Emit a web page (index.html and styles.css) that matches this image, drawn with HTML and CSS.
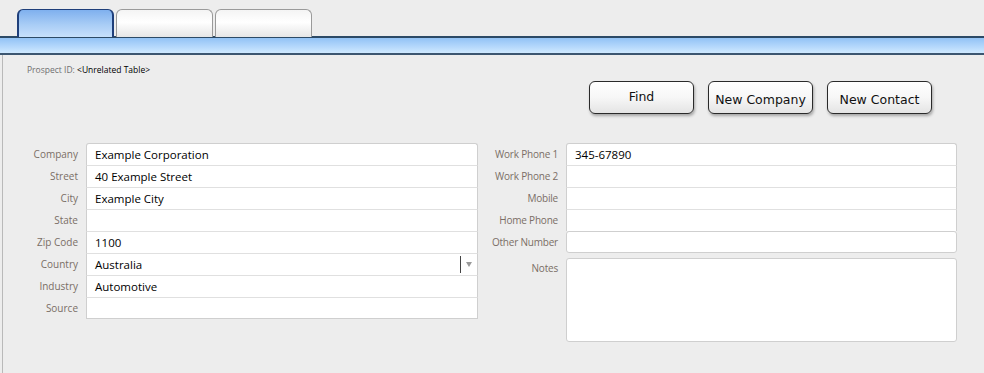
FILE: index.html
```html
<!DOCTYPE html>
<html lang="en">
<head>
  <meta charset="UTF-8" />
  <title>Prospect</title>
  <link rel="stylesheet" href="styles.css">
</head>
<body>

  <div class="tabs">
    <div class="tab active"></div>
    <div class="tab"></div>
    <div class="tab"></div>
  </div>
  <div class="bar"></div>

  <div class="panel">
    <p class="prospect">Prospect ID: <span>&lt;Unrelated Table&gt;</span></p>

    <div class="actions">
      <button class="btn btn-find">Find</button>
      <button class="btn">New Company</button>
      <button class="btn">New Contact</button>
    </div>

    <div class="form">
      <div class="col">
        <div class="row"><label>Company</label><div class="field first">Example Corporation</div></div>
        <div class="row"><label>Street</label><div class="field">40 Example Street</div></div>
        <div class="row"><label>City</label><div class="field">Example City</div></div>
        <div class="row"><label>State</label><div class="field"></div></div>
        <div class="row"><label>Zip Code</label><div class="field">1100</div></div>
        <div class="row"><label>Country</label><div class="field combo">Australia<span class="arrow"></span></div></div>
        <div class="row"><label>Industry</label><div class="field">Automotive</div></div>
        <div class="row"><label>Source</label><div class="field last"></div></div>
      </div>

      <div class="col col-right">
        <div class="row"><label>Work Phone 1</label><div class="field first">345-67890</div></div>
        <div class="row"><label>Work Phone 2</label><div class="field"></div></div>
        <div class="row"><label>Mobile</label><div class="field"></div></div>
        <div class="row"><label>Home Phone</label><div class="field"></div></div>
        <div class="row"><label>Other Number</label><div class="field first last"></div></div>
        <div class="row notes-row"><label>Notes</label><div class="field notes first last"></div></div>
      </div>
    </div>
  </div>

</body>
</html>
```

FILE: styles.css
```css
body {
  margin: 0;
  background-color: #ededed;
  font-family: 'Open Sans', 'DejaVu Sans', sans-serif;
  color: #000;
  height: 373px;
  overflow: hidden;
}

.tabs {
  display: flex;
  gap: 2px;
  padding: 9px 0 0 17px;
  height: 27px;
}

.tab {
  width: 95px;
  height: 27px;
  border: 1px solid #9a9a9a;
  border-bottom: none;
  border-radius: 6px 6px 0 0;
  background: linear-gradient(#f4f4f4, #ffffff 45%, #e6e6e6);
}

.tab.active {
  border-color: #1f3f7a;
  border-width: 1px 2px 0 2px;
  width: 93px;
  background: linear-gradient(#7fb0ee, #a9cdf6 55%, #c7e0fb);
}

.bar {
  height: 15px;
  border-top: 2px solid #2c4a66;
  border-bottom: 2px solid #3c5670;
  background: linear-gradient(#92c2f5, #b0d5fb 50%, #cfe9ff);
}

.panel {
  margin-left: 2px;
  border-left: 1px solid #b9b9b9;
  height: 320px;
  padding: 0 0 0 24px;
}

.prospect {
  margin: 0;
  padding-top: 9px;
  font-size: 8.5px;
  color: #6f6f6f;
}

.prospect span {
  color: #000;
}

.actions {
  display: flex;
  gap: 14px;
  justify-content: flex-end;
  margin: 6px 52px 0 0;
}

.btn {
  width: 105px;
  height: 33px;
  border: 1px solid #2a2a2a;
  border-radius: 6px;
  background: linear-gradient(#ffffff, #f7f7f7 50%, #e4e4e4);
  box-shadow: 1px 2px 3px rgba(0, 0, 0, 0.3);
  font-family: 'DejaVu Sans', Verdana, sans-serif;
  font-size: 12.5px;
  color: #111;
  padding: 3px 0 0 0;
}

.btn-find {
  padding: 0 0 3px 0;
}

.form {
  display: flex;
  gap: 13px;
  margin-top: 29px;
}

.col {
  width: 451px;
}

.col-right {
  width: 466px;
}

.row {
  display: flex;
  height: 22px;
}

.row label {
  flex-shrink: 0;
  width: 51px;
  padding-right: 8px;
  text-align: right;
  white-space: nowrap;
  font-size: 10px;
  line-height: 22px;
  color: #7a6e66;
}

.col-right label {
  width: 67px;
  letter-spacing: -0.2px;
}

.field {
  flex: 1;
  box-sizing: border-box;
  height: 22px;
  background: #fff;
  border: 1px solid #cfcfcf;
  border-top-color: #e0e0e0;
  border-bottom: none;
  font-size: 11.5px;
  line-height: 21px;
  padding-left: 8px;
  position: relative;
}

.field.first {
  border-top-color: #cfcfcf;
  border-radius: 3px 3px 0 0;
}

.field.last {
  border-bottom: 1px solid #cfcfcf;
}

.field.first.last {
  border-radius: 3px;
}

.combo .arrow {
  position: absolute;
  right: 16px;
  top: 2px;
  width: 1px;
  height: 17px;
  background: #444;
}

.combo .arrow::after {
  content: "";
  position: absolute;
  left: 6px;
  top: 6px;
  border-left: 3px solid transparent;
  border-right: 3px solid transparent;
  border-top: 5px solid #9a9a9a;
}

.notes-row {
  margin-top: 5px;
  height: 84px;
}

.notes-row label {
  line-height: 20px;
}

.field.notes {
  height: 84px;
}
```
